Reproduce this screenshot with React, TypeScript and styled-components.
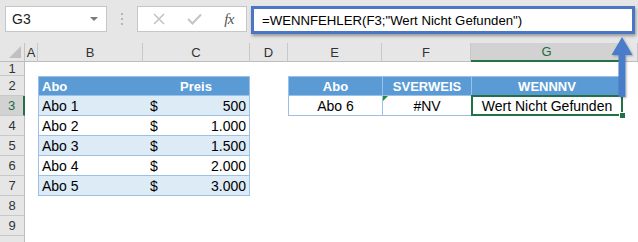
import React from 'react';
import styled, { createGlobalStyle, css } from 'styled-components';

const GlobalStyle = createGlobalStyle`
    html, body {
        margin: 0;
        padding: 0;
        background: #ffffff;
        overflow: hidden;
    }
    body {
        font-family: "Liberation Sans", Arial, sans-serif;
        color: #000;
    }
`;

const COLS = '25px 13px 105px 107px 38px 94px 89px 152px 1fr';
const LETTERS = ['A', 'B', 'C', 'D', 'E', 'F', 'G', 'H'];
const SELECTED_COL = 'G';
const SELECTED_ROW = 3;

type Fill = 'head' | 'band' | 'plain' | 'none';

type CellSpec = {
    text?: string;
    money?: string;
    fill?: Fill;
    align?: 'left' | 'center' | 'right';
    bold?: boolean;
    top?: boolean;
    bottom?: boolean;
    left?: boolean;
    right?: boolean;
    selected?: boolean;
    flag?: boolean;
};

// label is left empty for the row that is cut off by the bottom edge
type RowSpec = { n: number; h: number; label?: boolean; cells: Record<string, CellSpec> };

const priceRow = (name: string, amount: string, band: boolean): Record<string, CellSpec> => ({
    B: { text: name, fill: band ? 'band' : 'plain', left: true, bottom: true },
    C: { money: amount, fill: band ? 'band' : 'plain', right: true, bottom: true },
});

const ROWS: RowSpec[] = [
    { n: 1, h: 14, cells: {} },
    {
        n: 2,
        h: 20,
        cells: {
            B: { text: 'Abo', fill: 'head', bold: true, left: true, top: true, bottom: true },
            C: { text: 'Preis', fill: 'head', bold: true, align: 'center', right: true, top: true, bottom: true },
            E: { text: 'Abo', fill: 'head', bold: true, align: 'center', left: true, top: true, bottom: true },
            F: { text: 'SVERWEIS', fill: 'head', bold: true, align: 'center', left: true, top: true, bottom: true },
            G: { text: 'WENNNV', fill: 'head', bold: true, align: 'center', left: true, right: true, top: true, bottom: true },
        },
    },
    {
        n: 3,
        h: 20,
        cells: {
            ...priceRow('Abo 1', '500', true),
            E: { text: 'Abo 6', fill: 'plain', align: 'center', left: true, bottom: true },
            F: { text: '#NV', fill: 'plain', align: 'center', left: true, bottom: true, flag: true },
            G: { text: 'Wert Nicht Gefunden', fill: 'plain', align: 'center', left: true, right: true, bottom: true, selected: true },
        },
    },
    { n: 4, h: 20, cells: priceRow('Abo 2', '1.000', false) },
    { n: 5, h: 20, cells: priceRow('Abo 3', '1.500', true) },
    { n: 6, h: 20, cells: priceRow('Abo 4', '2.000', false) },
    { n: 7, h: 20, cells: priceRow('Abo 5', '3.000', true) },
    { n: 8, h: 20, cells: {} },
    { n: 9, h: 20, cells: {} },
    { n: 10, h: 20, label: false, cells: {} },
];

export default function App() {
    return (
        <Page>
            <GlobalStyle />
            <Toolbar>
                <NameBox>
                    <span>G3</span>
                    <DropCaret />
                </NameBox>
                <Grip>
                    <i />
                    <i />
                    <i />
                </Grip>
                <FxBox>
                    <svg width="12" height="12" viewBox="0 0 12 12">
                        <path d="M1 1L11 11M11 1L1 11" stroke="#c4c4c4" strokeWidth="1.6" fill="none" />
                    </svg>
                    <svg width="15" height="12" viewBox="0 0 15 12">
                        <path d="M1 6L5.5 10.5L14 1.5" stroke="#c4c4c4" strokeWidth="2" fill="none" />
                    </svg>
                    <FxLabel>fx</FxLabel>
                </FxBox>
                <FormulaBox>=WENNFEHLER(F3;"Wert Nicht Gefunden")</FormulaBox>
            </Toolbar>

            <Sheet>
                <Row $h={19}>
                    <Corner />
                    {LETTERS.map((l) => (
                        <ColHead key={l} $selected={l === SELECTED_COL}>
                            {l === 'H' ? '' : l}
                        </ColHead>
                    ))}
                </Row>
                {ROWS.map((row) => (
                    <Row key={row.n} $h={row.h}>
                        <RowHead $selected={row.n === SELECTED_ROW}>{row.label === false ? '' : row.n}</RowHead>
                        {LETTERS.map((l) => {
                            const c = row.cells[l];
                            if (!c) return <Cell key={l} $fill="none" />;
                            return (
                                <Cell
                                    key={l}
                                    $fill={c.fill ?? 'plain'}
                                    $align={c.align ?? 'left'}
                                    $bold={!!c.bold}
                                    $top={!!c.top}
                                    $bottom={!!c.bottom}
                                    $left={!!c.left}
                                    $right={!!c.right}
                                    $selected={!!c.selected}
                                    $flag={!!c.flag}
                                >
                                    {c.money ? (
                                        <>
                                            <span>$</span>
                                            <span>{c.money}</span>
                                        </>
                                    ) : (
                                        c.text
                                    )}
                                </Cell>
                            );
                        })}
                    </Row>
                ))}
            </Sheet>

            <Arrow width="30" height="68" viewBox="0 0 30 68">
                <defs>
                    <filter id="arrowShadow" x="-30%" y="-10%" width="160%" height="130%">
                        <feDropShadow dx="1" dy="1" stdDeviation="1" floodColor="#000" floodOpacity="0.3" />
                    </filter>
                </defs>
                <g filter="url(#arrowShadow)">
                    <path d="M16 4L26.5 22H19.5V64H12.5V22H5.5Z" fill="#4a7cc9" />
                </g>
            </Arrow>
        </Page>
    );
}

const Page = styled.div`
    position: relative;
    width: 638px;
    height: 242px;
    overflow: hidden;
    background: #fff;
`;

const Toolbar = styled.div`
    display: flex;
    align-items: flex-start;
    height: 43px;
    padding: 6px 0 0 5px;
    box-sizing: border-box;
    background: #e6e6e6;
`;

const NameBox = styled.div`
    display: flex;
    align-items: center;
    justify-content: space-between;
    width: 102px;
    height: 26px;
    box-sizing: border-box;
    padding: 0 6px 0 6px;
    background: #fff;
    border: 1px solid #c6c6c6;
    font-size: 14px;
    color: #222;
`;

const DropCaret = styled.span`
    width: 0;
    height: 0;
    border-left: 4px solid transparent;
    border-right: 4px solid transparent;
    border-top: 4px solid #7a7a7a;
    margin-right: 2px;
`;

const Grip = styled.div`
    display: flex;
    flex-direction: column;
    align-items: center;
    justify-content: center;
    gap: 3px;
    width: 30px;
    height: 26px;

    i {
        display: block;
        width: 2px;
        height: 2px;
        background: #b4b4b4;
    }
`;

const FxBox = styled.div`
    display: flex;
    align-items: center;
    justify-content: space-between;
    width: 110px;
    height: 26px;
    box-sizing: border-box;
    padding: 0 12px 0 15px;
    background: #fff;
    border: 1px solid #c6c6c6;
`;

const FxLabel = styled.span`
    font-family: "Liberation Serif", "Times New Roman", serif;
    font-style: italic;
    font-size: 15px;
    color: #555;
    letter-spacing: -0.5px;
`;

const FormulaBox = styled.div`
    display: flex;
    align-items: center;
    margin-left: 4px;
    width: 384px;
    height: 28px;
    box-sizing: border-box;
    padding: 0 0 0 8px;
    background: #fff;
    border: 3px solid #4a76c5;
    box-shadow: 1px 2px 3px rgba(0, 0, 0, 0.35);
    font-size: 13.2px;
    color: #000;
    white-space: nowrap;
`;

const Sheet = styled.div`
    display: flex;
    flex-direction: column;
`;

const Row = styled.div<{ $h: number }>`
    display: grid;
    grid-template-columns: ${COLS};
    height: ${({ $h }) => $h}px;
`;

const headBase = css`
    display: flex;
    align-items: center;
    justify-content: center;
    box-sizing: border-box;
    background: #e6e6e6;
    font-size: 13px;
    color: #333;
    overflow: hidden;
`;

const Corner = styled.div`
    ${headBase};
    position: relative;
    border-right: 1px solid #c3c3c3;
    border-bottom: 1px solid #bdbdbd;

    &::after {
        content: '';
        position: absolute;
        right: 3px;
        bottom: 3px;
        border-left: 12px solid transparent;
        border-bottom: 12px solid #c0c0c0;
    }
`;

const ColHead = styled.div<{ $selected: boolean }>`
    ${headBase};
    border-right: 1px solid #c8c8c8;
    border-bottom: 1px solid #bdbdbd;
    ${({ $selected }) =>
        $selected &&
        css`
            background: #d2d2d2;
            color: #1e6b40;
            border-bottom: 2px solid #217346;
        `}
`;

const RowHead = styled.div<{ $selected: boolean }>`
    ${headBase};
    border-bottom: 1px solid #c8c8c8;
    border-right: 1px solid #bdbdbd;
    ${({ $selected }) =>
        $selected &&
        css`
            background: #d2d2d2;
            color: #1e6b40;
            border-right: 2px solid #217346;
        `}
`;

const FILL: Record<Fill, string> = {
    head: '#5b9bd5',
    band: '#ddebf7',
    plain: '#ffffff',
    none: '#ffffff',
};

const EDGE = '#9bc2e6';

const Cell = styled.div<{
    $fill: Fill;
    $align?: 'left' | 'center' | 'right';
    $bold?: boolean;
    $top?: boolean;
    $bottom?: boolean;
    $left?: boolean;
    $right?: boolean;
    $selected?: boolean;
    $flag?: boolean;
}>`
    position: relative;
    display: flex;
    align-items: center;
    justify-content: ${({ $align }) =>
        $align === 'center' ? 'center' : $align === 'right' ? 'flex-end' : 'space-between'};
    box-sizing: border-box;
    padding: 0 3px 0 3px;
    background: ${({ $fill }) => FILL[$fill]};
    color: ${({ $fill }) => ($fill === 'head' ? '#fff' : '#000')};
    font-size: ${({ $bold }) => ($bold ? '13px' : '14px')};
    font-weight: ${({ $bold }) => ($bold ? 700 : 400)};
    white-space: nowrap;
    border-top: ${({ $top }) => ($top ? `1px solid ${EDGE}` : 'none')};
    border-bottom: ${({ $bottom }) => ($bottom ? `1px solid ${EDGE}` : 'none')};
    border-left: ${({ $left }) => ($left ? `1px solid ${EDGE}` : 'none')};
    border-right: ${({ $right }) => ($right ? `1px solid ${EDGE}` : 'none')};

    span:first-child {
        margin-left: 4px;
    }

    ${({ $flag }) =>
        $flag &&
        css`
            &::before {
                content: '';
                position: absolute;
                left: 0;
                top: 0;
                border-top: 5px solid #1e8c3a;
                border-right: 5px solid transparent;
            }
        `}

    ${({ $selected }) =>
        $selected &&
        css`
            &::after {
                content: '';
                position: absolute;
                inset: -1px -1px -1px -1px;
                border: 2px solid #217346;
                pointer-events: none;
            }
            &::before {
                content: '';
                position: absolute;
                right: -4px;
                bottom: -4px;
                width: 5px;
                height: 5px;
                background: #217346;
                border: 1px solid #fff;
                z-index: 2;
            }
        `}
`;

const Arrow = styled.svg`
    position: absolute;
    left: 606px;
    top: 33px;
    overflow: visible;
`;
